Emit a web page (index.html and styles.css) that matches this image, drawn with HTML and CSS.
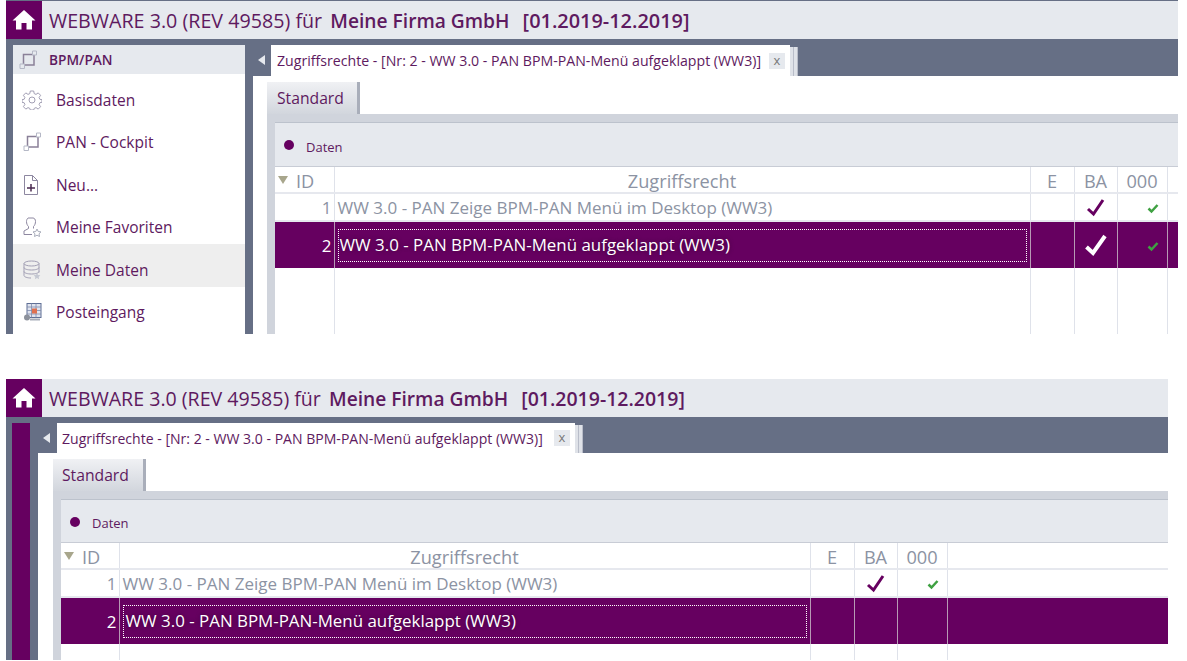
FILE: index.html
```html
<!DOCTYPE html>
<html lang="de">

<head>
  <meta charset="UTF-8" />
  <meta name="viewport" content="width=device-width, initial-scale=1.0" />
  <title>WEBWARE 3.0</title>
  <link rel="stylesheet" href="styles.css">
</head>

<body>
  <!-- menu open -->
  <div class="shot shot-open">
    <div class="topbar">
      <div class="home">
        <svg width="24" height="22" viewBox="0 0 24 22"><path d="M12 1 L23.5 11.5 L20 11.5 L20 20.5 L14.5 20.5 L14.5 14 L9.500 14 L9.500 20.500 L4 20.500 L4 11.500 L0.500 11.500 Z" fill="#fff" /></svg>
      </div>
      <div class="title">WEBWARE 3.0 (REV 49585) für <b>Meine Firma GmbH</b> <b class="period">[01.2019-12.2019]</b></div>
    </div>
    <div class="main">
      <div class="sidebar">
        <div class="side-head">
          <svg class="ico" width="20" height="20" viewBox="0 0 20 20"><path d="M5.500 4.500h10.500v10.500h-10.500z" fill="none" stroke="#8a8098" stroke-width="1.500" /><path d="M2 14h4.500v4.500h-4.500z M14.500 1h4v4h-4z" fill="#e6e9ee" stroke="#b5b8c6" /></svg>
          BPM/PAN
        </div>
        <div class="side-item">
          <svg class="ico" width="20" height="20" viewBox="0 0 20 20"><circle cx="10" cy="10" r="3" fill="none" stroke="#a29fb4" /><path d="M8.300 1h3.400l.5 2.600 1.800.8 2.200-1.500 2.400 2.400-1.500 2.200.8 1.800 2.100.4v2.600l-2.100.4-.8 1.800 1.500 2.200-2.400 2.400-2.200-1.500-1.800.8-.5 1.600h-3.400l-.5-1.600-1.800-.8-2.200 1.500-2.400-2.400 1.500-2.200-.8-1.800-2.100-.4v-2.600l2.100-.4.8-1.800-1.500-2.200 2.400-2.400 2.200 1.500 1.800-.8z" fill="none" stroke="#a29fb4" /></svg>
          Basisdaten
        </div>
        <div class="side-item">
          <svg class="ico" width="20" height="20" viewBox="0 0 20 20"><path d="M5.500 4.500h10.500v10.500h-10.500z" fill="none" stroke="#8a8098" stroke-width="1.500" /><path d="M2 14h4.500v4.500h-4.500z M14.500 1h4v4h-4z" fill="#fff" stroke="#b5b8c6" /></svg>
          PAN - Cockpit
        </div>
        <div class="side-item">
          <svg class="ico" width="20" height="20" viewBox="0 0 20 20"><path d="M2.500 .5h8l5 5v14h-13z M10.500 .5v5h5" fill="none" stroke="#8d87a0" /><path d="M9 9v7.500 M5 13h8" stroke="#4a2a50" stroke-width="1.500" /></svg>
          Neu...
        </div>
        <div class="side-item">
          <svg class="ico" width="20" height="20" viewBox="0 0 20 20"><path d="M6 1h5c1.500 0 2.500 1.500 2.500 3.500 0 2-.8 4-2 5v2 M6 1c-1 1-1.500 2-1.500 3.500 0 2 .8 4 2 5v2l-4.500 2.500v3.500h8" fill="none" stroke="#8d87a0" /><path d="M15 12l1.200 2.500 2.800.4-2 1.900.5 2.700-2.500-1.300-2.500 1.300.5-2.700-2-1.900 2.800-.4z" fill="none" stroke="#a9adbb" /></svg>
          Meine Favoriten
        </div>
        <div class="side-item side-active">
          <svg class="ico" width="20" height="20" viewBox="0 0 20 20"><ellipse cx="9.500" cy="3.500" rx="7.500" ry="2.500" fill="none" stroke="#a29fb4" /><path d="M2 3.500v12c0 1.500 3.500 2.500 7 2.500 M17 3.500v9 M2 7.500c0 1.500 3.500 2.500 7.500 2.500s7.500-1 7.500-2.500 M2 11.500c0 1.500 3.500 2.500 7.500 2.500s7.500-1 7.500-2.500" fill="none" stroke="#a29fb4" /><path d="M15 13l1 2 2.300.3-1.600 1.600.4 2.300-2.100-1.100-2.100 1.100.4-2.300-1.600-1.600 2.300-.3z" fill="#c5c8d2" /></svg>
          Meine Daten
        </div>
        <div class="side-item">
          <svg class="ico" width="20" height="20" viewBox="0 0 20 20"><rect x="5" y="1.500" width="14" height="14" fill="#dfe3ee" stroke="#5f6f95" /><path d="M5 5h14 M5 8.500h14 M5 12h14 M9.500 1.500v14 M14 1.500v14" stroke="#7f8cab" stroke-width=".8" /><rect x="10" y="6.500" width="5" height="5" fill="#e0704f" /><circle cx="5" cy="15.500" r="3" fill="#8c919c" /><path d="M8 17.500h10" stroke="#a7acb8" stroke-width="2" /></svg>
          Posteingang
        </div>
      </div>
      <div class="content">
        <div class="tabstrip">
          <div class="collapse"></div>
          <div class="page-tab">
            <span>Zugriffsrechte - [Nr: 2 - WW 3.0 - PAN BPM-PAN-Menü aufgeklappt (WW3)]</span>
            <span class="close">x</span>
          </div>
          <div class="page-stack"></div>
          <div class="page-stack"></div>
        </div>
        <div class="pane">
          <div class="inner-tab">Standard</div>
          <div class="panel">
            <div class="panel-head"><i class="dot"></i>Daten</div>
            <table class="grid">
              <colgroup>
                <col class="c-id"><col class="c-name"><col class="c-e"><col class="c-ba"><col class="c-000"><col>
              </colgroup>
              <tr class="grid-head">
                <th class="th-id"><i class="sort"></i>ID</th>
                <th>Zugriffsrecht</th>
                <th>E</th>
                <th>BA</th>
                <th>000</th>
                <th></th>
              </tr>
              <tr class="row">
                <td class="num">1</td>
                <td>WW 3.0 - PAN Zeige BPM-PAN Menü im Desktop (WW3)</td>
                <td></td>
                <td class="mid"><svg width="20" height="19" viewBox="0 0 20 19"><path d="M2 11 L7.500 16 L17 2" fill="none" stroke="#660060" stroke-width="3" /></svg></td>
                <td class="tick"><svg width="12" height="11" viewBox="0 0 12 11"><path d="M1.500 5.500 L4.500 8.500 L10.500 2" fill="none" stroke="#3fa142" stroke-width="2.500" /></svg></td>
                <td></td>
              </tr>
              <tr class="row row-sel">
                <td class="num">2</td>
                <td><span class="focus">WW 3.0 - PAN BPM-PAN-Menü aufgeklappt (WW3)</span></td>
                <td></td>
                <td class="mid"><svg width="24" height="24" viewBox="0 0 24 24"><path d="M2.500 14 L9 20 L21 3" fill="none" stroke="#fff" stroke-width="4" /></svg></td>
                <td class="tick"><svg width="12" height="11" viewBox="0 0 12 11"><path d="M1.500 5.500 L4.500 8.500 L10.500 2" fill="none" stroke="#3fa142" stroke-width="2.500" /></svg></td>
                <td></td>
              </tr>
              <tr class="row-empty"><td></td><td></td><td></td><td></td><td></td><td></td></tr>
            </table>
          </div>
        </div>
      </div>
    </div>
  </div>

  <!-- menu collapsed -->
  <div class="shot shot-closed">
    <div class="topbar">
      <div class="home">
        <svg width="24" height="22" viewBox="0 0 24 22"><path d="M12 1 L23.500 11.500 L20 11.500 L20 20.500 L14.500 20.500 L14.500 14 L9.500 14 L9.500 20.500 L4 20.500 L4 11.500 L0.500 11.500 Z" fill="#fff" /></svg>
      </div>
      <div class="title">WEBWARE 3.0 (REV 49585) für <b>Meine Firma GmbH</b> <b class="period">[01.2019-12.2019]</b></div>
    </div>
    <div class="main">
      <div class="rail"></div>
      <div class="content">
        <div class="tabstrip">
          <div class="collapse"></div>
          <div class="page-tab">
            <span>Zugriffsrechte - [Nr: 2 - WW 3.0 - PAN BPM-PAN-Menü aufgeklappt (WW3)]</span>
            <span class="close">x</span>
          </div>
          <div class="page-stack"></div>
          <div class="page-stack"></div>
        </div>
        <div class="pane">
          <div class="inner-tab">Standard</div>
          <div class="panel">
            <div class="panel-head"><i class="dot"></i>Daten</div>
            <table class="grid">
              <colgroup>
                <col class="c-id"><col class="c-name"><col class="c-e"><col class="c-ba"><col class="c-000"><col>
              </colgroup>
              <tr class="grid-head">
                <th class="th-id"><i class="sort"></i>ID</th>
                <th>Zugriffsrecht</th>
                <th>E</th>
                <th>BA</th>
                <th>000</th>
                <th></th>
              </tr>
              <tr class="row">
                <td class="num">1</td>
                <td>WW 3.0 - PAN Zeige BPM-PAN Menü im Desktop (WW3)</td>
                <td></td>
                <td class="mid"><svg width="20" height="19" viewBox="0 0 20 19"><path d="M2 11 L7.500 16 L17 2" fill="none" stroke="#660060" stroke-width="3" /></svg></td>
                <td class="tick"><svg width="12" height="11" viewBox="0 0 12 11"><path d="M1.500 5.500 L4.500 8.500 L10.500 2" fill="none" stroke="#3fa142" stroke-width="2.500" /></svg></td>
                <td></td>
              </tr>
              <tr class="row row-sel">
                <td class="num">2</td>
                <td><span class="focus">WW 3.0 - PAN BPM-PAN-Menü aufgeklappt (WW3)</span></td>
                <td></td>
                <td></td>
                <td></td>
                <td></td>
              </tr>
              <tr class="row-empty"><td></td><td></td><td></td><td></td><td></td><td></td></tr>
            </table>
          </div>
        </div>
      </div>
    </div>
  </div>
</body>

</html>
```
FILE: styles.css
```css
body {
  font-family: "Open Sans", Arial, sans-serif;
  background-color: #fff;
  color: #5e1a60;
  margin: 0;
  overflow: hidden;
}

.shot {
  display: flex;
  flex-direction: column;
  margin-left: 6px;
  background: #666f85;
  overflow: hidden;
}

.shot-open {
  width: 1172px;
  height: 334px;
  margin-bottom: 45px;
  padding-top: 1px;
  box-sizing: border-box;
}

.shot-closed {
  width: 1162px;
  height: 281px;
}

/* Top bar */
.topbar {
  display: flex;
  align-items: center;
  height: 38px;
  flex-shrink: 0;
  background: #e6e9ee;
}

.home {
  display: flex;
  align-items: center;
  justify-content: center;
  width: 36px;
  height: 100%;
  background: #660060;
}

.title {
  margin-left: 7px;
  font-size: 19.7px;
  white-space: pre-wrap;
}

.shot-closed .title {
  font-size: 19.6px;
}

.title b {
  font-size: 19.2px;
  font-weight: 600;
  margin-left: 3px;
}

.title .period {
  font-size: 19.9px;
  margin-left: 8px;
}

.shot-closed .title .period {
  font-size: 19.5px;
}

.main {
  display: flex;
  flex: 1;
  min-height: 0;
  padding-top: 6px;
}

/* Sidebar */
.sidebar {
  width: 232px;
  margin: 0 8px 0 7px;
  flex-shrink: 0;
  background: #fff;
}

.side-head {
  display: flex;
  align-items: center;
  gap: 11px;
  height: 29px;
  padding-left: 5px;
  background: #e6e9ee;
  font-size: 13.7px;
  font-weight: 600;
}

.side-item {
  display: flex;
  align-items: center;
  gap: 14px;
  height: 42.5px;
  padding: 9px 0 0 9px;
  box-sizing: border-box;
  font-size: 15.5px;
}

.side-active {
  background: #eee;
}

.ico {
  flex-shrink: 0;
}

.rail {
  width: 18px;
  margin: 0 8px 0 6px;
  flex-shrink: 0;
  background: #660060;
}

/* Content */
.content {
  display: flex;
  flex-direction: column;
  flex: 1;
  min-width: 0;
}

.tabstrip {
  display: flex;
  height: 31px;
  flex-shrink: 0;
}

.shot-closed .tabstrip {
  height: 30px;
}

.collapse {
  width: 18px;
}

.shot-closed .collapse {
  width: 19px;
}

.collapse::after {
  content: "";
  display: block;
  margin: 10px 0 0 5px;
  border-style: solid;
  border-width: 5px 7px 5px 0;
  border-color: transparent #e6e9ee transparent transparent;
  width: 0;
}

.page-tab {
  display: flex;
  align-items: center;
  justify-content: space-between;
  width: 519px;
  padding: 0 5px 0 6px;
  box-sizing: border-box;
  background: #fff;
  font-size: 14.15px;
}

.shot-closed .page-tab {
  width: 518px;
  padding-left: 5px;
  font-size: 14.05px;
}

.close {
  width: 16px;
  height: 16px;
  background: #e6e9ee;
  color: #777;
  font-size: 13px;
  line-height: 14px;
  text-align: center;
}

.page-stack {
  width: 3px;
  margin-top: 2px;
  background: #dfe2e8;
  border-right: 1px solid #b9bdc9;
}

.pane {
  flex: 1;
  min-height: 0;
  padding: 6px 0 0 14px;
  background: #fff;
}

.shot-closed .pane {
  padding-left: 15px;
}

.inner-tab {
  width: 93px;
  height: 32px;
  padding-left: 10px;
  box-sizing: border-box;
  border-right: 3px solid #a9aeba;
  background: linear-gradient(#f0f1f4, #d2d6dd);
  font-size: 15.7px;
  line-height: 32px;
}

.shot-closed .inner-tab {
  padding-left: 9px;
}

.panel {
  height: 100%;
  padding: 8px 0 0 8px;
  background: #d0d4dc;
}

.panel-head {
  display: flex;
  align-items: center;
  height: 45px;
  padding: 4px 0 0 9px;
  background: #e6e9ee;
  border-top: 1px solid #bcc2cc;
  border-bottom: 1px solid #c8ccd5;
  box-sizing: border-box;
  font-size: 13px;
}

.shot-closed .panel-head {
  height: 44px;
}

.dot {
  width: 10px;
  height: 10px;
  margin: 0 12px 3px 0;
  border-radius: 50%;
  background: #660060;
}

/* Table */
.grid {
  width: 100%;
  height: 100%;
  table-layout: fixed;
  border-collapse: collapse;
  background: #fff;
  color: #8c93a3;
}

.c-id { width: 59px; }
.shot-closed .c-id { width: 58px; }
.shot-open .c-name { width: 696px; }
.shot-closed .c-name { width: 691px; }
.c-e { width: 44px; }
.c-ba { width: 43px; }
.c-000 { width: 50px; }

.grid td,
.grid th {
  padding: 0;
  border-right: 1px solid #dfe2ea;
  border-bottom: 2px solid #e6e8ee;
  font-size: 17px;
  font-weight: 400;
  overflow: hidden;
  white-space: nowrap;
}

.grid td:last-child,
.grid th:last-child {
  border-right: none;
}

.grid-head th {
  height: 26px;
  padding-top: 3px;
  box-sizing: border-box;
  font-size: 18.2px;
  line-height: 1;
  text-align: center;
}

.grid-head .th-id {
  padding-left: 3px;
  text-align: left;
}

.sort {
  display: inline-block;
  margin-right: 8px;
  vertical-align: 4px;
  border-style: solid;
  border-width: 8px 5px 0;
  border-color: #a8a68c transparent transparent;
}

.row td {
  height: 26px;
  padding-left: 3px;
  line-height: 1;
}

.row .num {
  padding: 0 2px 0 0;
  text-align: right;
}

.row .mid {
  padding: 0;
  text-align: center;
}

.row .tick {
  padding: 0 8px 0 0;
  text-align: right;
}

.row svg {
  display: inline-block;
  vertical-align: middle;
}

.row-sel td {
  height: 46px;
  padding-left: 3px;
  background: #660060;
  color: #fff;
  border-bottom: none;
  border-right-color: #b79ab5;
}

.focus {
  display: block;
  height: 33px;
  margin-right: 3px;
  border: 1px dotted #fff;
  box-sizing: border-box;
  font-size: 16.9px;
  line-height: 29px;
  padding-left: 1px;
  text-shadow: 0 0 4px #3f003c;
}

.shot-closed .focus {
  padding-left: 2px;
}

.row-empty td {
  border-bottom: none;
}
```
